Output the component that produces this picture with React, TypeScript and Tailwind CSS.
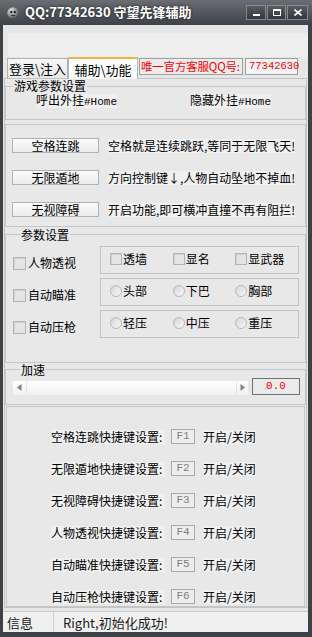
import React from 'react';

const Check = ({ size = 'big' }: { size?: 'big' | 'small' }) => (
  <span
    className={
      size === 'big'
        ? 'inline-block w-[13px] h-[13px] border border-[#b4b4b4] bg-[#e4e4e4] shadow-[inset_1px_1px_0_#d2d2d2]'
        : 'inline-block w-[12px] h-[12px] border border-[#b4b4b4] bg-[#e4e4e4] shadow-[inset_1px_1px_0_#d2d2d2]'
    }
  />
);

const Radio = () => (
  <span className="inline-block w-[12px] h-[12px] rounded-full border border-[#b8b8b8] bg-linear-to-br from-[#d6d6d6] to-[#f7f7f7]" />
);

const Btn = ({ label }: { label: string }) => (
  <div className="w-[87px] h-[15px] border border-[#b2b2b2] bg-linear-to-b from-[#fbfbfb] to-[#ececec] flex items-center justify-center leading-none text-black">
    {label}
  </div>
);

const hotkeys = [
  ['空格连跳快捷键设置:', 'F1'],
  ['无限遁地快捷键设置:', 'F2'],
  ['无视障碍快捷键设置:', 'F3'],
  ['人物透视快捷键设置:', 'F4'],
  ['自动瞄准快捷键设置:', 'F5'],
  ['自动压枪快捷键设置:', 'F6'],
];

const App: React.FC = () => {
  return (
    <div className="w-[312px] h-[637px] bg-[#3e4146] flex flex-col text-[12px] text-black font-['Noto_Sans_CJK_SC',sans-serif] overflow-hidden">
      {/* title bar */}
      <div className="h-[25px] shrink-0 flex items-start bg-linear-to-b from-[#6a6d72] to-[#3f4247]">
        <svg className="ml-[7px] mt-[7px]" width="12" height="12" viewBox="0 0 12 12">
          <defs>
            <radialGradient id="ball" cx="0.35" cy="0.3" r="0.8">
              <stop offset="0" stopColor="#e8e8e8" />
              <stop offset="0.6" stopColor="#8a8a8a" />
              <stop offset="1" stopColor="#3a3a3a" />
            </radialGradient>
          </defs>
          <circle cx="6" cy="6" r="5.8" fill="url(#ball)" />
          <circle cx="4.3" cy="5" r="1.2" fill="#222" />
          <circle cx="7.7" cy="5" r="1.2" fill="#222" />
          <path d="M4 8.2 Q6 9.6 8 8.2" stroke="#222" strokeWidth="1" fill="none" />
        </svg>
        <span className="ml-[6px] mt-[3px] text-[13px] font-bold text-white leading-[18px] [text-shadow:0_0_3px_#1a1a1a]">
          QQ:77342630 守望先锋辅助
        </span>
        <div className="ml-auto mr-[4px] mt-[5px] flex gap-[1px]">
          <div className="w-[20px] h-[15px] border border-[#85888d] bg-linear-to-b from-[#595c61] to-[#33363a] flex items-end justify-center pb-[3px]">
            <div className="w-[7px] h-[2px] bg-white" />
          </div>
          <div className="w-[19px] h-[15px] border border-[#85888d] bg-linear-to-b from-[#595c61] to-[#33363a] flex items-center justify-center">
            <div className="w-[8px] h-[7px] border border-white border-t-2" />
          </div>
          <div className="w-[21px] h-[15px] border border-[#85888d] bg-linear-to-b from-[#595c61] to-[#33363a] flex items-center justify-center">
            <svg width="8" height="7" viewBox="0 0 8 7">
              <path d="M0.5 0.5 L7.5 6.5 M7.5 0.5 L0.5 6.5" stroke="white" strokeWidth="1.6" />
            </svg>
          </div>
        </div>
      </div>

      {/* window body */}
      <div className="flex-1 ml-[3px] mr-[4px] mb-[5px] bg-[#e6e6e6] flex flex-col">
        <div className="h-[32px] shrink-0 pt-[8px] pl-[5px]">
          <div className="h-[24px] bg-[#eeeeee]" />
        </div>

        {/* tabs */}
        <div className="h-[21px] shrink-0 flex items-end pl-[4px] relative z-10">
          <div className="w-[61px] h-[20px] border border-b-0 border-[#a9b4bc] bg-linear-to-b from-[#f6f6f6] to-[#e9e9e9] flex items-center justify-center text-[13px] leading-none">
            登录\注入
          </div>
          <div className="w-[70px] h-[22px] -mb-[1px] border border-b-0 border-[#a9b4bc] border-t-2 border-t-[#f2b446] bg-white flex items-center justify-center text-[13px] leading-none">
            辅助\功能
          </div>
          <div className="self-start mt-[1px] ml-[1px] w-[104px] h-[17px] border border-[#a0a0a0] bg-[#ececec] flex items-center pl-[1px] text-[#ff0000] text-[11.5px] tracking-[-0.2px] leading-none whitespace-nowrap">
            唯一官方客服QQ号:
          </div>
          <div className="self-start mt-[1px] ml-[2px] w-[53px] h-[17px] border border-[#a0a0a0] bg-[#f4f4f4] flex items-center pl-[3px] text-[#ff0000] text-[10.5px] font-['Liberation_Mono',monospace] leading-none">
            77342630
          </div>
        </div>

        {/* tab panel */}
        <div className="flex-1 ml-[1px] mr-[1px] border border-[#c4c4c4] bg-[#e8e8e8] flex flex-col pt-[1px]">
          {/* 游戏参数设置 */}
          <fieldset className="h-[40px] border border-[#c6c6c6] shrink-0">
            <legend className="ml-[7px] px-[1px] text-[12px] leading-[12px]">游戏参数设置</legend>
            <div className="flex pl-[30px] mt-[2px]">
              <span className="bg-[#f0f0f0] leading-[12px] whitespace-nowrap">
                呼出外挂<span className="font-['Liberation_Mono',monospace] text-[11px]">#Home</span>
              </span>
              <span className="ml-[73px] bg-[#f0f0f0] leading-[12px] whitespace-nowrap">
                隐藏外挂<span className="font-['Liberation_Mono',monospace] text-[11px]">#Home</span>
              </span>
            </div>
          </fieldset>

          {/* buttons */}
          <div className="mt-[4px] h-[103px] shrink-0 border border-[#c6c6c6] pt-[13px] pl-[6px] flex flex-col gap-[17px]">
            <div className="flex items-center gap-[9px] h-[15px]">
              <Btn label="空格连跳" />
              <span className="bg-[#f0f0f0] leading-[14px] whitespace-nowrap">空格就是连续跳跃,等同于无限飞天!</span>
            </div>
            <div className="flex items-center gap-[9px] h-[15px]">
              <Btn label="无限遁地" />
              <span className="bg-[#f0f0f0] leading-[14px] whitespace-nowrap">方向控制键↓,人物自动坠地不掉血!</span>
            </div>
            <div className="flex items-center gap-[9px] h-[15px]">
              <Btn label="无视障碍" />
              <span className="bg-[#f0f0f0] leading-[14px] whitespace-nowrap">开启功能,即可横冲直撞不再有阻拦!</span>
            </div>
          </div>

          {/* 参数设置 */}
          <fieldset className="mt-[1px] h-[135px] shrink-0 border border-[#c6c6c6] pl-[7px]">
            <legend className="ml-[7px] px-[1px] leading-[13px]">参数设置</legend>
            <div className="mt-[5px] flex flex-col gap-[4px]">
              {[
                ['人物透视', 'check', ['透墙', '显名', '显武器']],
                ['自动瞄准', 'radio', ['头部', '下巴', '胸部']],
                ['自动压枪', 'radio', ['轻压', '中压', '重压']],
              ].map(([label, kind, opts]) => (
                <div key={label as string} className="flex items-center">
                  <div className="w-[87px] flex items-center gap-[2px] pt-[6px]">
                    <Check />
                    <span className="leading-[14px]">{label as string}</span>
                  </div>
                  <div className="w-[199px] h-[28px] border border-[#c2c2c2] flex items-center pl-[9px] pb-[2px]">
                    {(opts as string[]).map((o) => (
                      <div key={o} className="w-[64px] flex items-center gap-[1px]">
                        {kind === 'check' ? <Check size="small" /> : <Radio />}
                        <span className="leading-[14px]">{o}</span>
                      </div>
                    ))}
                  </div>
                </div>
              ))}
            </div>
          </fieldset>

          {/* 加速 */}
          <fieldset className="h-[42px] shrink-0 border border-[#c6c6c6] pl-[7px]">
            <legend className="ml-[7px] px-[1px] leading-[13px]">加速</legend>
            <div className="mt-[2px] flex items-center gap-[4px]">
              <div className="w-[235px] h-[14px] mt-[2px] flex bg-linear-to-b from-[#ffffff] to-[#f1f1f1]">
                <div className="w-[14px] h-full border-r border-[#e6e6e6] flex items-center justify-center">
                  <svg width="5" height="7" viewBox="0 0 5 7">
                    <path d="M4.5 0 L0 3.5 L4.5 7 Z" fill="#7a8a7a" />
                  </svg>
                </div>
                <div className="flex-1" />
                <div className="w-[12px] h-full border-l border-[#e6e6e6] flex items-center justify-center">
                  <svg width="5" height="7" viewBox="0 0 5 7">
                    <path d="M0.5 0 L5 3.5 L0.5 7 Z" fill="#7a8a7a" />
                  </svg>
                </div>
              </div>
              <div className="w-[48px] h-[17px] border border-[#707070] bg-[#ebebeb] flex items-center justify-center text-[#ff0000] font-['Liberation_Mono',monospace] text-[11px] leading-none">
                0.0
              </div>
            </div>
          </fieldset>

          {/* 快捷键 */}
          <div className="mt-[1px] mx-[1px] flex-1 border border-[#c6c6c6] pt-[22px] pl-[44px] flex flex-col gap-[17px]">
            {hotkeys.map(([label, key]) => (
              <div key={key} className="flex items-center h-[15px]">
                <span className="w-[114px] bg-[#f0f0f0] leading-[14px] whitespace-nowrap">{label}</span>
                <div className="ml-[6px] w-[24px] h-[15px] border border-[#a8a8a8] bg-[#ededed] flex items-center justify-center text-[#808080] font-['Liberation_Mono',monospace] text-[11px] leading-none">
                  {key}
                </div>
                <span className="ml-[8px] bg-[#f0f0f0] leading-[14px] whitespace-nowrap">开启/关闭</span>
              </div>
            ))}
          </div>
        </div>

        {/* status bar */}
        <div className="mt-[3px] h-[21px] shrink-0 border-t border-[#c9c9c9] bg-[#f0f0f0] flex items-center text-[13px] text-[#1a1a1a]">
          <span className="w-[50px] pl-[4px] leading-none">信息</span>
          <div className="w-px h-full bg-[#d0d0d0]" />
          <span className="ml-[9px] leading-none">Right,初始化成功!</span>
        </div>
      </div>
    </div>
  );
};

export default App;
